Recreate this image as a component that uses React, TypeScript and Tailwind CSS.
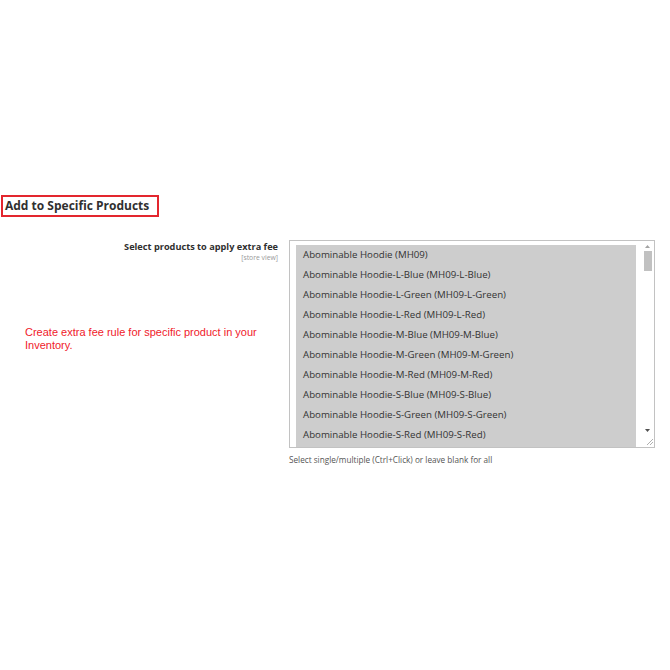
import React from 'react';

const PRODUCTS = [
  'Abominable Hoodie (MH09)',
  'Abominable Hoodie-L-Blue (MH09-L-Blue)',
  'Abominable Hoodie-L-Green (MH09-L-Green)',
  'Abominable Hoodie-L-Red (MH09-L-Red)',
  'Abominable Hoodie-M-Blue (MH09-M-Blue)',
  'Abominable Hoodie-M-Green (MH09-M-Green)',
  'Abominable Hoodie-M-Red (MH09-M-Red)',
  'Abominable Hoodie-S-Blue (MH09-S-Blue)',
  'Abominable Hoodie-S-Green (MH09-S-Green)',
  'Abominable Hoodie-S-Red (MH09-S-Red)',
];

export default function App() {
  return (
    <div className="w-[670px] h-[670px] bg-white pt-[195px] font-['Open_Sans',sans-serif] text-[#303030]">
      {/* Section title, outlined in red */}
      <div className="ml-[1px] whitespace-nowrap border-2 border-[#e3262e] pl-[2px] h-[22px] w-[158px] leading-[17px] text-[12px] font-bold">
        Add to Specific Products
      </div>

      <div className="flex mt-[23px]">
        {/* Left — label + note */}
        <div className="w-[289px] shrink-0">
          <div className="text-right pr-[11px]">
            <p className="text-[9.2px] font-bold leading-[13px] text-[#303030]">Select products to apply extra fee</p>
            <p className="text-[6.8px] leading-[9px] text-[#999]">[store view]</p>
          </div>
          <p className="mt-[64px] pl-[25px] pr-[20px] font-['Liberation_Sans',Arial,sans-serif] text-[11px] leading-[13px] text-[#f0202a]">
            Create extra fee rule for specific product in your Inventory.
          </p>
        </div>

        {/* Right — multiselect */}
        <div>
          <div className="w-[366px] h-[208px] border border-[#c2c2c2] flex">
            <div className="flex-1 pl-[6px] pt-[4px] flex">
              <div className="bg-[#cdcdcd] w-[340px]">
                {PRODUCTS.map((p) => (
                  <div key={p} className="h-5 leading-5 pl-[7px] text-[9.7px] text-[#333] whitespace-nowrap">
                    {p}
                  </div>
                ))}
              </div>
            </div>
            {/* Scrollbar */}
            <div className="w-[13px] flex flex-col items-center pt-[3px] pb-[1px]">
              <svg width="7" height="5" viewBox="0 0 7 5"><path d="M3.5 1 L6 4 L1 4 Z" fill="#a3a3a3" /></svg>
              <div className="mt-[2px] w-[8px] h-[20px] bg-[#c1c1c1]" />
              <div className="flex-1" />
              <svg width="7" height="5" viewBox="0 0 7 5"><path d="M1 1 L6 1 L3.5 4 Z" fill="#505050" /></svg>
              <svg className="self-end mt-[4px]" width="9" height="9" viewBox="0 0 9 9">
                <path d="M8 2 L2 8 M8 5 L5 8" stroke="#b0b0b0" strokeWidth="1" />
              </svg>
            </div>
          </div>
          <p className="mt-[6px] text-[8.2px] leading-[12px] text-[#555] whitespace-nowrap">
            Select single/multiple (Ctrl+Click) or leave blank for all
          </p>
        </div>
      </div>
    </div>
  );
}
